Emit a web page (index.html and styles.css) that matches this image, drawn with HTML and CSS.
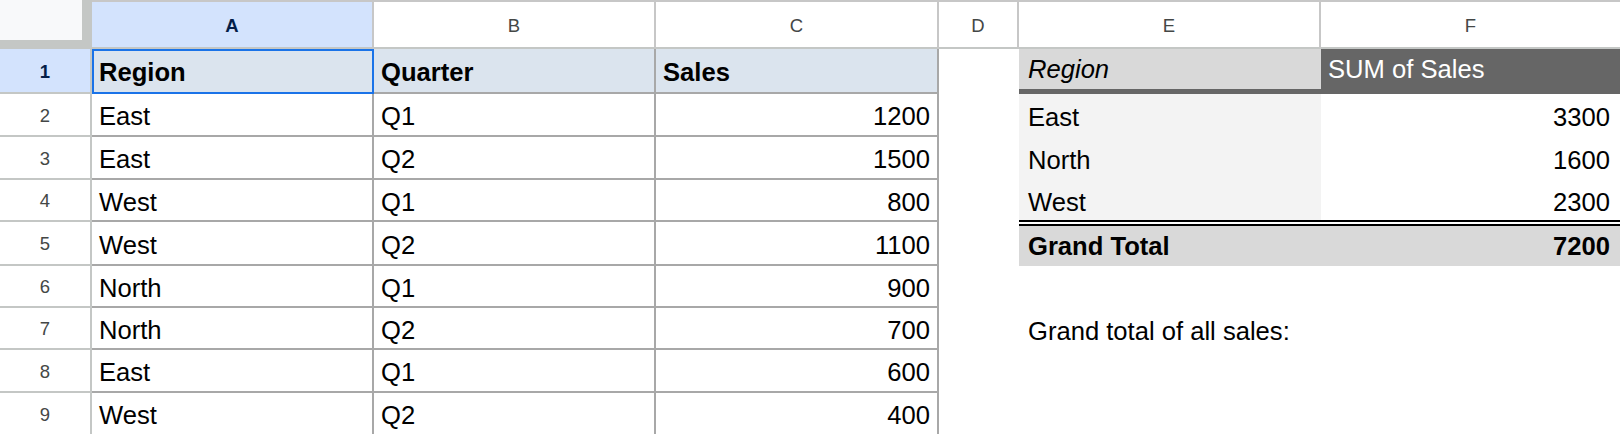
FILE: index.html
```html
<!DOCTYPE html>
<html lang="en">

<head>
    <meta charset="UTF-8">
    <meta name="viewport" content="width=device-width, initial-scale=1.0">
    <title>Sales by Region</title>
    <link rel="stylesheet" href="styles.css">
</head>

<body>
    <div class="sheet">
        <!-- column headers -->
        <div class="cell corner"><div class="corner-inner"></div></div>
        <div class="cell col-head active">A</div>
        <div class="cell col-head">B</div>
        <div class="cell col-head">C</div>
        <div class="cell col-head">D</div>
        <div class="cell col-head">E</div>
        <div class="cell col-head last">F</div>

        <!-- row 1 -->
        <div class="cell row-head active">1</div>
        <div class="cell data head selected">Region</div>
        <div class="cell data head">Quarter</div>
        <div class="cell data head">Sales</div>
        <div class="cell"></div>
        <div class="cell pv-head-label">Region</div>
        <div class="cell pv-head-value">SUM of Sales</div>

        <!-- row 2 -->
        <div class="cell row-head">2</div>
        <div class="cell data">East</div>
        <div class="cell data">Q1</div>
        <div class="cell data num">1200</div>
        <div class="cell"></div>
        <div class="cell pv-label">East</div>
        <div class="cell pv-value">3300</div>

        <!-- row 3 -->
        <div class="cell row-head">3</div>
        <div class="cell data">East</div>
        <div class="cell data">Q2</div>
        <div class="cell data num">1500</div>
        <div class="cell"></div>
        <div class="cell pv-label">North</div>
        <div class="cell pv-value">1600</div>

        <!-- row 4 -->
        <div class="cell row-head">4</div>
        <div class="cell data">West</div>
        <div class="cell data">Q1</div>
        <div class="cell data num">800</div>
        <div class="cell"></div>
        <div class="cell pv-label pv-last">West</div>
        <div class="cell pv-value pv-last">2300</div>

        <!-- row 5 -->
        <div class="cell row-head">5</div>
        <div class="cell data">West</div>
        <div class="cell data">Q2</div>
        <div class="cell data num">1100</div>
        <div class="cell"></div>
        <div class="cell pv-total pv-total-label">Grand Total</div>
        <div class="cell pv-total pv-value">7200</div>

        <!-- row 6 -->
        <div class="cell row-head">6</div>
        <div class="cell data">North</div>
        <div class="cell data">Q1</div>
        <div class="cell data num">900</div>
        <div class="cell"></div>
        <div class="cell"></div>
        <div class="cell"></div>

        <!-- row 7 -->
        <div class="cell row-head">7</div>
        <div class="cell data">North</div>
        <div class="cell data">Q2</div>
        <div class="cell data num">700</div>
        <div class="cell"></div>
        <div class="cell note">Grand total of all sales:</div>
        <div class="cell"></div>

        <!-- row 8 -->
        <div class="cell row-head">8</div>
        <div class="cell data">East</div>
        <div class="cell data">Q1</div>
        <div class="cell data num">600</div>
        <div class="cell"></div>
        <div class="cell"></div>
        <div class="cell"></div>

        <!-- row 9 -->
        <div class="cell row-head">9</div>
        <div class="cell data">West</div>
        <div class="cell data">Q2</div>
        <div class="cell data num">400</div>
        <div class="cell"></div>
        <div class="cell"></div>
        <div class="cell"></div>
    </div>
</body>

</html>
```

FILE: styles.css
```css
* {
    margin: 0;
    padding: 0;
    box-sizing: border-box;
}

body {
    font-family: "Liberation Sans", Arial, sans-serif;
    color: #000;
    background: #fff;
    overflow: hidden;
}

.sheet {
    display: grid;
    grid-template-columns: 92px 282px 282px 283px 80px 302px 1fr;
    grid-template-rows: 49px 45px 43px 43px 42px 44px 42px 42px 43px 43px;
}

.cell {
    display: flex;
    align-items: center;
    min-width: 0;
    padding: 4px 7px 0;
    font-size: 25.6px;
    white-space: nowrap;
}

/* headers */
.corner {
    background: #c4c7c5;
    padding: 0;
    align-items: flex-start;
}

.corner-inner {
    width: 82px;
    height: 40px;
    background: #f8f9fa;
}

.col-head {
    justify-content: center;
    padding: 3px 0 0;
    font-size: 18.5px;
    color: #444746;
    border-top: 2px solid #c7c7c7;
    border-right: 2px solid #c7c7c7;
    border-bottom: 2px solid #c4c7c5;
}

.col-head.last {
    border-right: none;
}

.row-head {
    justify-content: center;
    padding: 2px 0 0;
    font-size: 18.5px;
    color: #444746;
    border-right: 2px solid #c4c7c5;
    border-bottom: 2px solid #c4c7c5;
}

.col-head.active,
.row-head.active {
    background: #d3e3fd;
    color: #041e49;
    font-weight: bold;
}

/* source table */
.data {
    border-right: 2px solid #a8a8a8;
    border-bottom: 2px solid #a8a8a8;
}

.data.head {
    background: #dbe4ee;
    font-weight: bold;
}

.data.num {
    justify-content: flex-end;
}

.data.selected {
    border-color: #1a73e8;
    box-shadow: inset 2px 2px 0 #1a73e8;
}

/* pivot table */
.pv-head-label,
.pv-head-value {
    padding-top: 0;
    border-bottom: 5px solid #666;
}

.pv-head-label {
    background: #d9d9d9;
    font-style: italic;
    padding-left: 9px;
}

.pv-head-value {
    background: #666;
    color: #fff;
}

.pv-label {
    background: #f3f3f3;
    padding-left: 9px;
}

.pv-value {
    justify-content: flex-end;
    padding-right: 10px;
}

.pv-last {
    border-bottom: 2px solid #000;
}

.pv-total {
    background: #d9d9d9;
    font-weight: bold;
    box-shadow: inset 0 2px 0 #fff, inset 0 4px 0 #000;
}

.pv-total-label {
    padding-left: 9px;
}

.note {
    padding-left: 9px;
}
```
